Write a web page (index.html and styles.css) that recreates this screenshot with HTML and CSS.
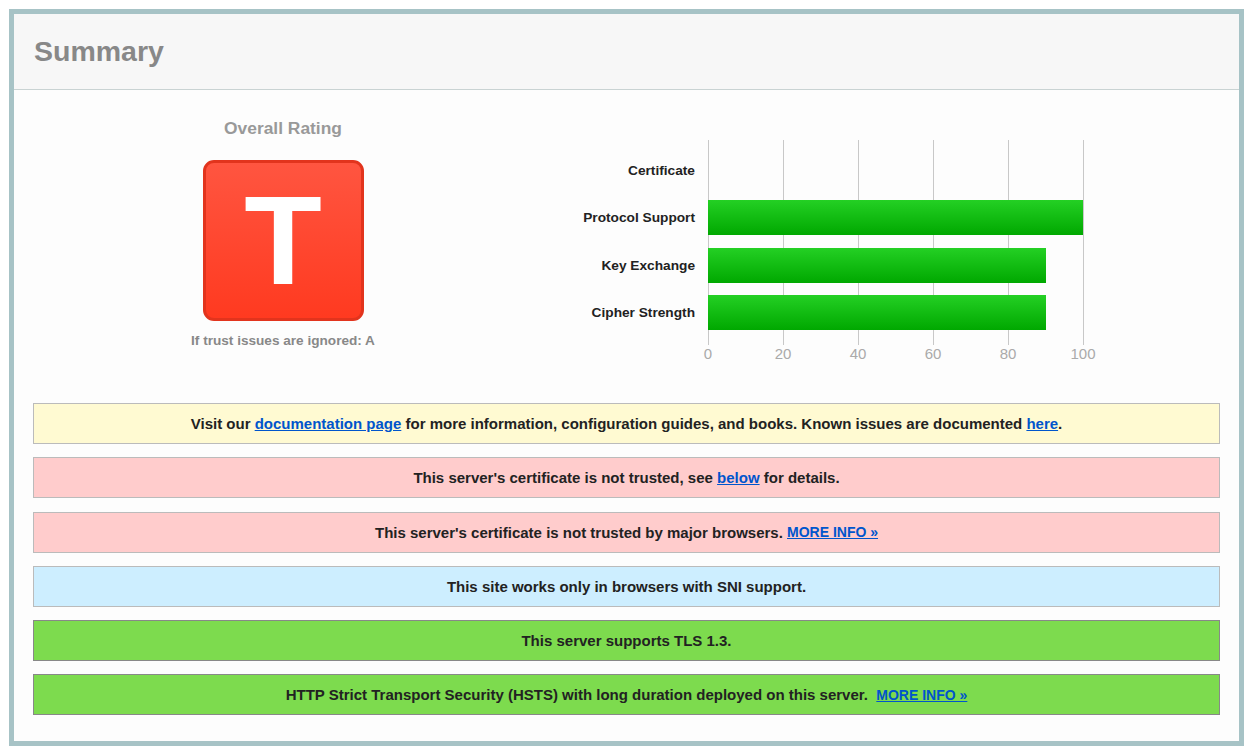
FILE: index.html
```html
<!DOCTYPE html>
<html>
<head>
<meta charset="utf-8">
<link rel="stylesheet" href="styles.css">
</head>
<body>
<div class="panel">
  <div class="panel-head"><h1 class="title">Summary</h1></div>
  <div class="panel-body">
    <div class="overview">
      <div class="rating-col">
        <div class="rating-title">Overall Rating</div>
        <div class="grade">T</div>
        <div class="rating-note">If trust issues are ignored: A</div>
      </div>
      <div class="chart">
        <div class="chart-main">
          <div class="labels">
            <div class="label">Certificate</div>
            <div class="label">Protocol Support</div>
            <div class="label">Key Exchange</div>
            <div class="label">Cipher Strength</div>
          </div>
          <div class="plot">
            <div class="bar-row"></div>
            <div class="bar-row"><div class="bar" style="width:100%"></div></div>
            <div class="bar-row"><div class="bar" style="width:90%"></div></div>
            <div class="bar-row"><div class="bar" style="width:90%"></div></div>
          </div>
        </div>
        <div class="axis">
          <span class="tick">0</span><span class="tick">20</span><span class="tick">40</span><span class="tick">60</span><span class="tick">80</span><span class="tick">100</span>
        </div>
      </div>
    </div>
    <div class="notices">
      <div class="notice notice-warn">Visit our <a href="#">documentation page</a> for more information, configuration guides, and books. Known issues are documented <a href="#">here</a>.</div>
      <div class="notice notice-error">This server's certificate is not trusted, see <a href="#">below</a> for details.</div>
      <div class="notice notice-error">This server's certificate is not trusted by major browsers. <a href="#" class="more">MORE INFO »</a></div>
      <div class="notice notice-info">This site works only in browsers with SNI support.</div>
      <div class="notice notice-good">This server supports TLS 1.3.</div>
      <div class="notice notice-good">HTTP Strict Transport Security (HSTS) with long duration deployed on this server. &nbsp;<a href="#" class="more">MORE INFO »</a></div>
    </div>
  </div>
</div>
</body>
</html>
```
FILE: styles.css
```css
html, body {
  margin: 0;
  padding: 0;
  background: #ffffff;
}
body {
  padding: 9px 5px 4px 9px;
  font-family: "Liberation Sans", Arial, sans-serif;
}
.panel {
  width: 1225px;
  border: 5px solid #a7c3c6;
  background: #fdfdfd;
}
.panel-head {
  height: 75px;
  background: #f7f7f7;
  border-bottom: 1px solid #c9d3d3;
  display: flex;
  align-items: center;
  padding-left: 20px;
}
.title {
  margin: 0;
  font-size: 28.5px;
  font-weight: bold;
  color: #888888;
}
.panel-body {
  padding: 27px 19px 26px 19px;
}
.overview {
  display: flex;
  align-items: flex-start;
}
.rating-col {
  width: 500px;
  display: flex;
  flex-direction: column;
  align-items: center;
}
.rating-title {
  font-size: 17.4px;
  line-height: 22px;
  font-weight: bold;
  color: #999999;
}
.grade {
  margin-top: 21px;
  width: 155px;
  height: 155px;
  border: 3px solid #e2341d;
  border-radius: 11px;
  background: linear-gradient(to bottom, #ff5540, #ff3a20);
  color: #ffffff;
  font-size: 127px;
  font-weight: bold;
  line-height: 1;
  display: flex;
  align-items: center;
  justify-content: center;
}
.rating-note {
  margin-top: 11px;
  font-size: 13.6px;
  line-height: 17px;
  font-weight: bold;
  color: #888888;
}
.chart {
  margin-top: 23px;
}
.chart-main {
  display: flex;
}
.labels {
  width: 162px;
  padding-top: 13px;
  display: flex;
  flex-direction: column;
  gap: 12.3px;
  margin-right: 13px;
}
.label {
  height: 35px;
  display: flex;
  align-items: center;
  justify-content: flex-end;
  font-size: 13.7px;
  font-weight: bold;
  color: #222222;
}
.plot {
  width: 376px;
  height: 205px;
  box-sizing: border-box;
  padding-top: 13px;
  background: repeating-linear-gradient(to right, #c8c8c8 0, #c8c8c8 1px, transparent 1px, transparent 75px);
  display: flex;
  flex-direction: column;
  gap: 12.3px;
}
.bar-row {
  height: 35px;
  width: 375px;
}
.bar {
  height: 35px;
  background: linear-gradient(to bottom, #24d024, #00a800);
}
.axis {
  margin-left: 175px;
  width: 375px;
  display: flex;
  justify-content: space-between;
  font-size: 15px;
  line-height: 17px;
  color: #aaaaaa;
}
.tick {
  width: 0;
  display: flex;
  justify-content: center;
  white-space: nowrap;
}
.notices {
  margin-top: 41px;
  display: flex;
  flex-direction: column;
  gap: 13.25px;
}
.notice {
  height: 39px;
  border: 1px solid #bbbbbb;
  display: flex;
  align-items: center;
  justify-content: center;
  font-size: 15px;
  font-weight: bold;
  color: #222222;
  white-space: pre-wrap;
}
.notice a {
  color: #0055cc;
  text-decoration: underline;
}
.notice a.more {
  font-size: 14px;
}
.notice-warn { background: #fffad2; }
.notice-error { background: #ffcccc; }
.notice-info { background: #cdeeff; }
.notice-good { background: #7ddb4e; border-color: #888888; }
```
